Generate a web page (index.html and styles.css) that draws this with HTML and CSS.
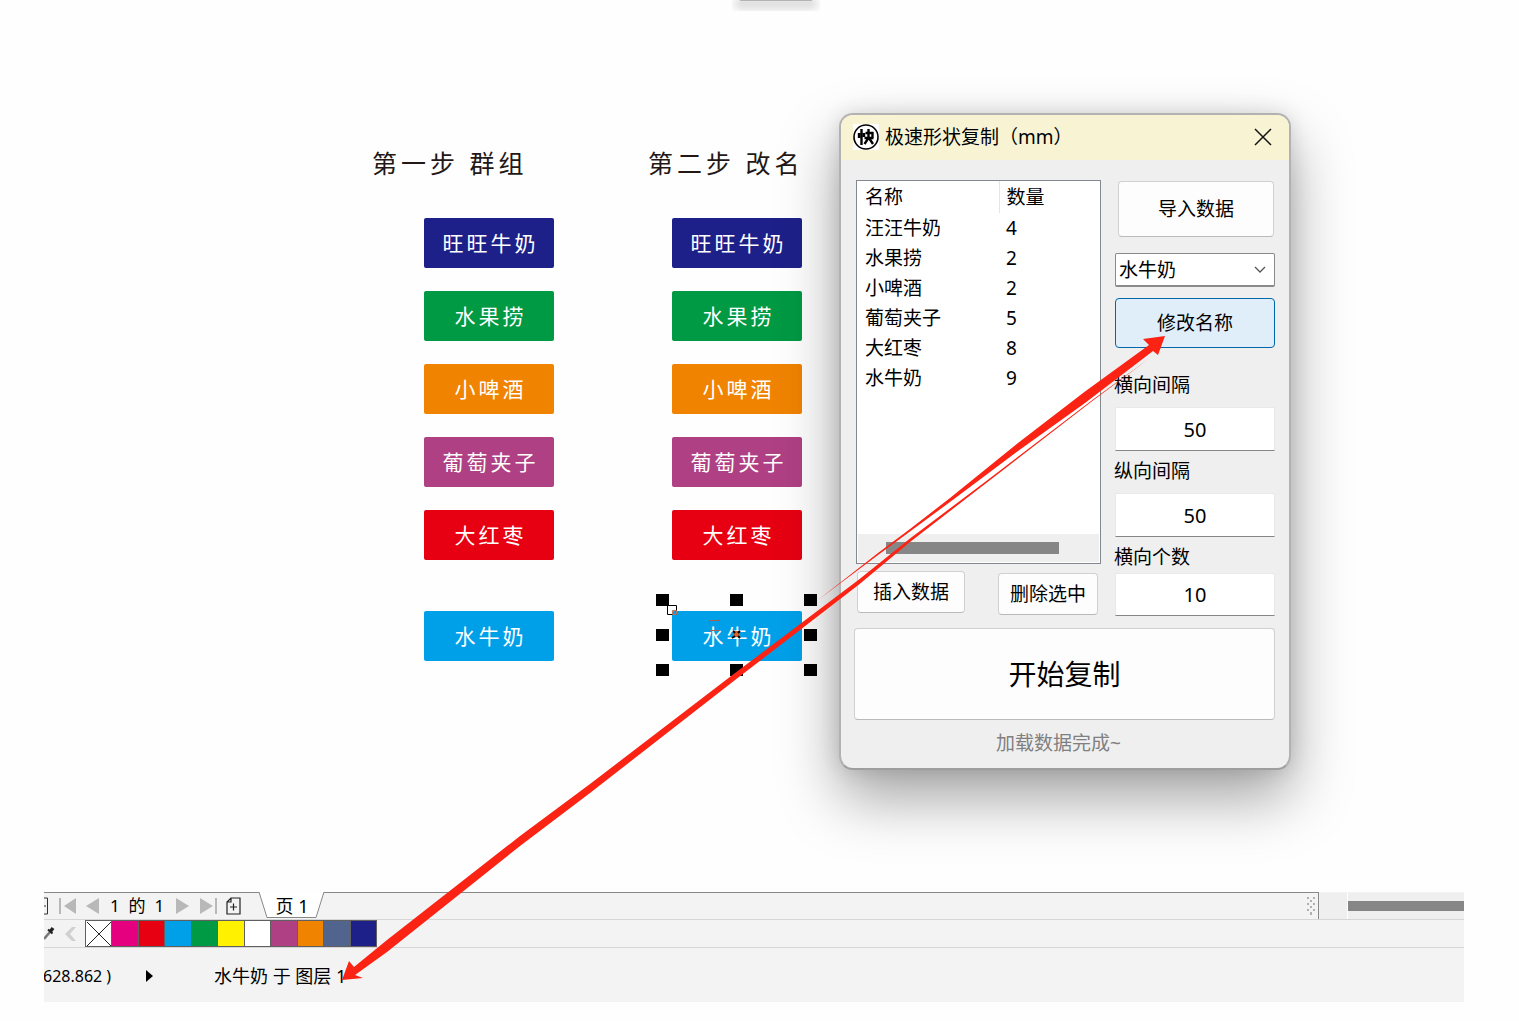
FILE: index.html
```html
<!DOCTYPE html>
<html lang="zh-CN">
<head>
<meta charset="utf-8">
<title>极速形状复制（mm）</title>
<link rel="stylesheet" href="styles.css">
</head>
<body>
<div class="toolbar-shadow"></div>

<main class="canvas">
  <section class="step">
    <h2 class="step-title">第一步 群组</h2>
    <ul class="tags">
      <li class="tag navy">旺旺牛奶</li>
      <li class="tag green">水果捞</li>
      <li class="tag orange">小啤酒</li>
      <li class="tag purple">葡萄夹子</li>
      <li class="tag red">大红枣</li>
      <li class="tag blue">水牛奶</li>
    </ul>
  </section>

  <section class="step">
    <h2 class="step-title">第二步 改名</h2>
    <ul class="tags">
      <li class="tag navy">旺旺牛奶</li>
      <li class="tag green">水果捞</li>
      <li class="tag orange">小啤酒</li>
      <li class="tag purple">葡萄夹子</li>
      <li class="tag red">大红枣</li>
      <li class="tag blue">水牛奶
        <svg class="selection" width="162" height="84" viewBox="0 0 162 84" aria-hidden="true">
          <path d="M0 1h13v12H0zM74 1h13v12H74zM148 1h13v12h-13zM0 36h13v12H0zM148 36h13v12h-13zM0 71h13v12H0zM74 71h13v12H74zM148 71h13v12h-13z"/>
          <path d="M11.500 12.500h9v9h-9z" fill="none" stroke="#000"/>
          <path d="M16.500 21.500v-4h4v4z" fill="none" stroke="#b8755c"/>
          <path d="M53.500 27.500h10v10h-10z" fill="none" stroke="#a8604a"/>
          <path d="M77 38h7v6h-7z" fill="#d9622b"/>
          <path d="M77 38l2 2M84 38l-2 2M76 45l3-2M84 45l-2-2" stroke="#000" stroke-width="2"/>
        </svg>
      </li>
    </ul>
  </section>

  <section class="dialog" role="dialog" aria-labelledby="dialog-title">
    <header class="titlebar">
      <svg class="logo" width="26" height="26" viewBox="0 0 26 26" aria-hidden="true">
        <path d="M0 0h26v26H0z" fill="#fff"/>
        <circle cx="13" cy="13" r="12" fill="#fff" stroke="#000" stroke-width="1.600"/>
        <path d="M8.500 5v16M6 9v5M11 9v4M12.500 9h7v5M11.500 14h9M15.500 5v9l-4 6M16 14l4 6" fill="none" stroke="#000" stroke-width="2.400"/>
      </svg>
      <h1 class="dialog-title" id="dialog-title">极速形状复制（mm）</h1>
      <button class="close" aria-label="关闭">
        <svg width="18" height="18" viewBox="0 0 18 18"><path d="M1 1l16 16M17 1L1 17" stroke="#111" stroke-width="1.500"/></svg>
      </button>
    </header>

    <div class="dialog-body">
      <div class="columns">
        <div class="left">
          <div class="list">
            <table>
              <thead><tr><th scope="col">名称</th><th scope="col">数量</th></tr></thead>
              <tbody>
                <tr><td>汪汪牛奶</td><td>4</td></tr>
                <tr><td>水果捞</td><td>2</td></tr>
                <tr><td>小啤酒</td><td>2</td></tr>
                <tr><td>葡萄夹子</td><td>5</td></tr>
                <tr><td>大红枣</td><td>8</td></tr>
                <tr><td>水牛奶</td><td>9</td></tr>
              </tbody>
            </table>
            <div class="scroll-track"><div class="scroll-thumb"></div></div>
          </div>
          <div class="list-actions">
            <button class="btn insert">插入数据</button>
            <button class="btn delete">删除选中</button>
          </div>
        </div>

        <div class="right">
          <button class="btn import">导入数据</button>
          <div class="picker">
            <select aria-label="名称"><option>水牛奶</option></select>
            <svg width="12" height="8" viewBox="0 0 12 8" aria-hidden="true"><path d="M1 1l5 5 5-5" fill="none" stroke="#555" stroke-width="1.300"/></svg>
          </div>
          <button class="btn rename">修改名称</button>
          <label for="gap-x">横向间隔</label>
          <input id="gap-x" type="text" value="50">
          <label for="gap-y">纵向间隔</label>
          <input id="gap-y" type="text" value="50">
          <label for="count-x">横向个数</label>
          <input id="count-x" type="text" value="10">
        </div>
      </div>
      <button class="btn start">开始复制</button>
      <p class="message">加载数据完成~</p>
    </div>
  </section>
</main>

<footer class="bottom">
  <div class="page-row">
    <nav class="pages">
      <svg class="clipped-page" width="5" height="18" viewBox="0 0 5 18" aria-hidden="true"><path d="M0 1h3.500v16H0M0 9h2" fill="none" stroke="#333"/></svg>
      <button class="nav first" aria-label="第一页"><svg width="18" height="18" viewBox="0 0 18 18"><path d="M0 1h2v16H0zM17 1v16L5 9z"/></svg></button>
      <button class="nav prev" aria-label="上一页"><svg width="14" height="18" viewBox="0 0 14 18"><path d="M13 1v16L0 9z"/></svg></button>
      <span class="page-count">1&nbsp; 的&nbsp; 1</span>
      <button class="nav next" aria-label="下一页"><svg width="14" height="18" viewBox="0 0 14 18"><path d="M0 1v16l13-8z"/></svg></button>
      <button class="nav last" aria-label="最后一页"><svg width="18" height="18" viewBox="0 0 18 18"><path d="M0 1v16l13-8zM15 1h2v16h-2z"/></svg></button>
      <button class="nav add" aria-label="添加页"><svg width="15" height="18" viewBox="0 0 15 18"><path d="M5 1h9v16H1V5zM5 1v4H1M4 10h7M7.500 6.500v7" fill="none" stroke="#222" stroke-width="1.200"/></svg></button>
      <button class="page-tab">
        <svg width="66" height="27" viewBox="0 0 66 27" aria-hidden="true"><path d="M0 0l8 25.500h49L65 0z" fill="#fff"/><path d="M0 0l8 25.500h49L65 0" fill="none" stroke="#888"/></svg>
        <span>页 1</span>
      </button>
      <svg class="grip" width="8" height="18" viewBox="0 0 8 18" aria-hidden="true"><path d="M0 0h2v2H0zM6 0h2v2H6zM3 3h2v2H3zM0 6h2v2H0zM6 6h2v2H6zM3 9h2v2H3zM0 12h2v2H0zM6 12h2v2H6zM3 15h2v3H3z" fill="#b0b0b0"/></svg>
    </nav>
    <div class="hscroll-gap"></div>
    <div class="hscroll"><div class="hscroll-thumb"></div></div>
  </div>

  <div class="palette-row">
    <svg width="11" height="16" viewBox="0 0 11 16" aria-hidden="true"><path d="M0 13l6-7" stroke="#777" stroke-width="2.500"/><path d="M4 3.500l4.500 4" stroke="#222" stroke-width="2"/><path d="M6 6l3-4" stroke="#222" stroke-width="3.500"/></svg>
    <svg class="back" width="12" height="16" viewBox="0 0 12 16" aria-hidden="true"><path d="M11 1L7 1 0 8l7 7h4L5 8z" fill="#d0d0d0"/></svg>
    <div class="palette">
      <i class="none"><svg width="26" height="26" viewBox="0 0 26 26"><path d="M1 1l24 24M25 1L1 25" stroke="#222"/></svg></i>
      <i class="magenta"></i><i class="red"></i><i class="blue"></i><i class="green"></i><i class="yellow"></i><i class="white"></i><i class="purple"></i><i class="orange"></i><i class="slate"></i><i class="navy"></i>
    </div>
  </div>

  <div class="status-row">
    <span class="coords">628.862 )</span>
    <svg width="8" height="12" viewBox="0 0 8 12" aria-hidden="true"><path d="M0 0l7 6-7 6z"/></svg>
    <span class="layer">水牛奶 于 图层 1</span>
  </div>
</footer>

<svg class="arrow" width="1519" height="1021" viewBox="0 0 1519 1021" aria-hidden="true">
  <g fill="#fb2314">
    <path d="M342 980L349 961 354 967 387 940 520 836 590 784 737 671.500 859 579.500 910 538.500 985 482 1093 399.500 1150 358 1093 400.500 985 484 910 542 859 584.500 737 678.500 590 793 520 846 387 952 355 975 363 978z"/>
    <path d="M818 600L878 553 910 529 950 498 1018 443 1085 391.500 1149 345 1143 339 1165 336 1158 355 1153 351 1085 403 1018 451 950 502 910 531.500 878 555z"/>
  </g>
</svg>
</body>
</html>
```
FILE: styles.css
```css
* { box-sizing: border-box; }

body {
  margin: 0;
  min-height: 100vh;
  position: relative;
  overflow-x: hidden;
  background: #fefefe;
  color: #000;
  font: 400 19px/26px "Noto Sans", "Noto Sans CJK SC", sans-serif;
}

h1, h2, p, ul { margin: 0; padding: 0; font-weight: inherit; }
ul { list-style: none; }
svg { display: block; flex: none; }
button, input, select { font: inherit; color: inherit; margin: 0; }
button { padding: 0; border: 0; background: none; }

.navy { background: #1d2088; }
.green { background: #009944; }
.orange { background: #f08300; }
.purple { background: #af4084; }
.red { background: #e60012; }
.blue { background: #00a0e9; }
.magenta { background: #e5007f; }
.yellow { background: #fff100; }
.white { background: #fff; }
.slate { background: #50648e; }

.toolbar-shadow {
  position: absolute;
  top: 0;
  left: 732px;
  width: 88px;
  height: 11px;
  overflow: hidden;
}
.toolbar-shadow::before {
  content: "";
  display: block;
  height: 1px;
  margin: 0 8px;
  background: #b4b4b4;
  box-shadow: 0 3px 8px 5px rgba(0, 0, 0, .14);
}

/* drawing canvas */
.canvas {
  display: grid;
  grid-template-columns: 276px 191px 452px;
  align-items: start;
  padding: 113px 0 122px 372px;
}
.step { padding-top: 32px; }
.step-title {
  font-size: 25px;
  line-height: 36px;
  letter-spacing: 4px;
  white-space: nowrap;
  color: #231815;
}
.tags {
  display: flex;
  flex-direction: column;
  gap: 23px;
  padding-top: 37px;
}
.step .tags { margin-left: 52px; }
.step + .step .tags { margin-left: 24px; }
.tag {
  position: relative;
  width: 130px;
  padding-left: 3px;
  border-radius: 2px;
  color: #fff;
  font-size: 21px;
  line-height: 50px;
  letter-spacing: 3px;
  text-align: center;
  white-space: nowrap;
}
.tag:last-child { margin-top: 28px; }
.selection {
  position: absolute;
  left: -16px;
  top: -18px;
}

/* dialog window */
.dialog {
  position: relative;
  border: 2px solid #b2b2b2;
  border-bottom-color: #9e9e9e;
  border-radius: 14px;
  background: #efefef;
  box-shadow: 0 28px 60px rgba(0, 0, 0, .36), 0 0 20px rgba(0, 0, 0, .12);
}
.titlebar {
  display: flex;
  align-items: center;
  gap: 6px;
  height: 45px;
  padding: 0 17px 2px 12px;
  border-radius: 12px 12px 0 0;
  background: #f8f4d3;
}
.dialog-title { flex: 1; font-size: 19px; }
.dialog-body { padding: 20px 14px 12px 13px; }
.columns { display: flex; justify-content: space-between; }
.left { width: 247px; padding-left: 2px; }
.list {
  display: flex;
  flex-direction: column;
  height: 384px;
  padding: 0 1px 1px;
  border: 1px solid #828790;
  background: #fff;
}
table { width: 100%; border-collapse: collapse; table-layout: fixed; }
th, td {
  height: 30px;
  padding: 0 7px;
  font-weight: inherit;
  text-align: left;
}
th { height: 32px; }
th:first-child { width: 141px; border-right: 1px solid #e5e5e5; }
.scroll-track {
  margin-top: auto;
  padding: 8px 0 8px 28px;
  background: #efefef;
}
.scroll-thumb { width: 173px; height: 12px; background: #868686; }
.list-actions {
  display: flex;
  justify-content: space-between;
  align-items: flex-end;
  padding: 7px 3px 0 1px;
}

.btn {
  border: 1px solid #d0d0d0;
  border-bottom-color: #bababa;
  border-radius: 4px;
  background: #fdfdfd;
}
.insert { width: 108px; height: 42px; align-self: flex-start; }
.delete { width: 100px; height: 42px; margin-top: 2px; }

.right {
  display: flex;
  flex-direction: column;
  width: 160px;
}
.import { height: 56px; margin: 1px 1px 0 3px; }
.picker { display: flex; align-items: center; margin-top: 16px; }
.picker svg { margin-left: -21px; pointer-events: none; }
.picker select {
  appearance: none;
  width: 100%;
  height: 34px;
  padding: 0 3px;
  border: 1px solid #8a8a8a;
  border-bottom-width: 2px;
  border-radius: 2px;
  background: #fff;
}
.rename {
  height: 50px;
  margin-top: 11px;
  border-color: #0067a8;
  background: #e0eef9;
}
.right label { height: 26px; margin: 24px 0 9px -1px; }
.right input {
  height: 44px;
  width: 100%;
  padding: 0;
  border: 1px solid #e8e8e8;
  border-bottom: 1px solid #868686;
  background: #fff;
  text-align: center;
  font-size: 20px;
}
.right input + label { margin: 7px 0 9px -1px; }
.right input:last-child { height: 43px; margin-top: -6px; }
.start {
  display: block;
  width: 100%;
  height: 92px;
  margin-top: 12px;
  font-size: 28px;
}
.message {
  margin-top: 10px;
  padding-right: 12px;
  text-align: center;
  color: #808080;
}

/* page tabs, colour palette and status bar */
.bottom {
  margin: 0 55px 20px 44px;
  overflow: hidden;
  background: #f3f3f3;
  font-size: 18px;
}
.page-row { display: flex; height: 28px; border-bottom: 1px solid #d6d6d6; }
.pages {
  flex: 1;
  display: flex;
  align-items: center;
  border: solid #888;
  border-width: 1px 1px 0 0;
}
.nav svg { fill: #b8b8b8; }
.first { margin-left: 10px; }
.prev { margin-left: 9px; }
.page-count { width: 76px; padding-left: 10px; font-size: 17px; white-space: nowrap; }
.last { margin-left: 10px; }
.add { margin-left: 8px; }
.page-tab {
  position: relative;
  align-self: stretch;
  width: 66px;
  margin-left: 18px;
}
.page-tab svg { position: absolute; left: 0; top: -1px; }
.page-tab span { position: relative; }
.grip { margin-left: auto; margin-right: 3px; }
.hscroll-gap { width: 28px; margin-top: 1px; background: #efefef; }
.hscroll {
  width: 117px;
  margin-top: 1px;
  padding-top: 8px;
  border-left: 1px solid #fff;
  background: #efefef;
}
.hscroll-thumb { height: 10px; background: #868686; }

.palette-row {
  display: flex;
  align-items: center;
  height: 28px;
  border-bottom: 1px solid #d6d6d6;
}
.back { margin-left: 10px; }
.palette {
  display: grid;
  grid-template-columns: repeat(11, 1fr);
  gap: 1px;
  width: 292px;
  height: 27px;
  margin-left: 8px;
  padding: 1px;
  background: #606060;
}
.palette .none { overflow: hidden; background: #fff; }

.status-row { display: flex; align-items: center; height: 54px; padding-top: 2px; }
.coords { width: 103px; margin-left: -1px; font-size: 16px; }
.layer { margin-left: 60px; }

.arrow {
  position: absolute;
  left: 0;
  top: 0;
  pointer-events: none;
}
```
